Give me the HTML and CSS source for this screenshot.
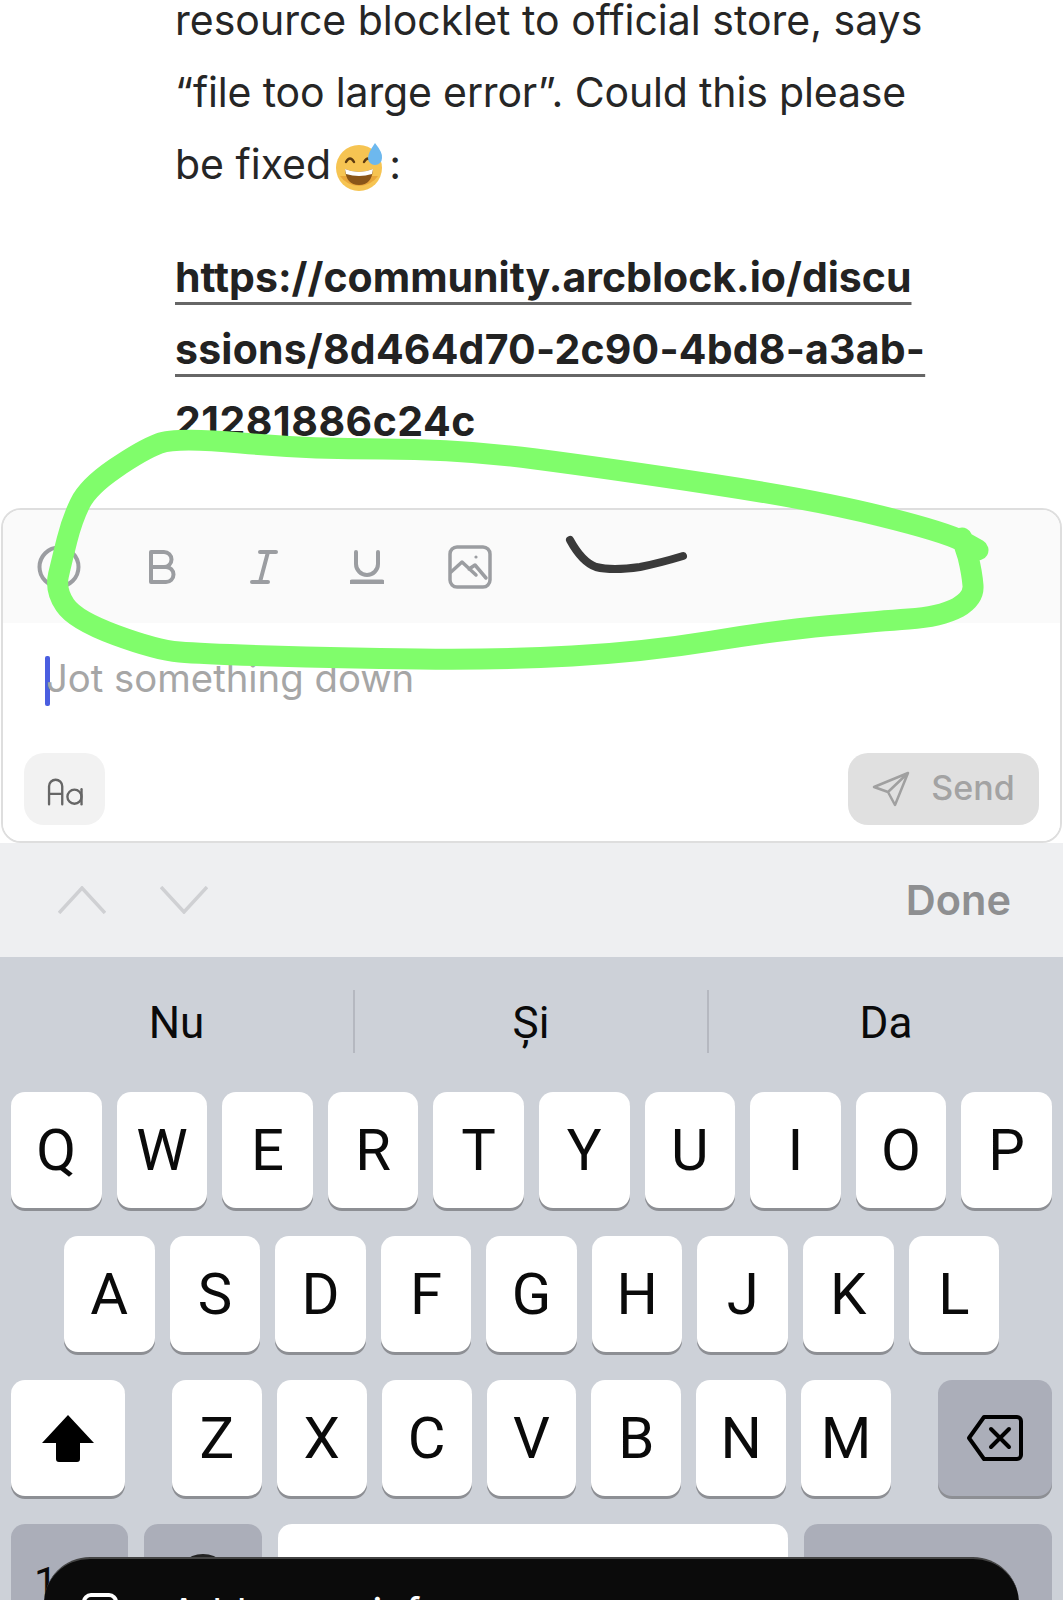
FILE: index.html
```html
<!DOCTYPE html>
<html lang="en">
  <head>
    <meta charset="UTF-8" />
    <meta name="viewport" content="width=device-width, initial-scale=1.0" />
    <title>Comment editor</title>
    <link rel="stylesheet" href="styles.css">
  </head>
  <body>
    <div class="screen">
      <div class="article">
        <div class="article-text">
          <p>resource blocklet to official store, says<br><span class="tight">“file too large error”. Could this please</span><br>be fixed<svg class="emoji" viewBox="0 0 50 50">
            <circle cx="24" cy="26" r="23" fill="#f6c452" />
            <path d="M5 34a23 23 0 0 0 38 0z" fill="#e9a63a" />
            <path d="M10 27q14 6 28 0q-1 16-14 16t-14-16z" fill="#8a5518" />
            <path d="M10 27q14 6 28 0l-1 5q-13 4-26 0z" fill="#fff" />
            <path d="M11 20q4-7 8 0M29 20q4-7 8 0" fill="none" stroke="#5c3a10" stroke-width="2.4" stroke-linecap="round" />
            <path d="M40 1q8 10 7 15a7 7 0 0 1-14 0q0-5 7-15z" fill="#6db8ee" />
          </svg>:</p>
          <p class="link-para"><a href="#">https://community.arcblock.io/discu<br><span class="wide">ssions/8d464d70-2c90-4bd8-a3ab-</span><br><span class="wider">21281886c24c</span></a></p>
        </div>
      </div>

      <div class="editor">
        <div class="toolbar">
          <svg class="tool tool-circle" viewBox="0 0 44 44"><circle cx="22" cy="22" r="19.5" /></svg>
          <svg class="tool tool-b" viewBox="0 0 28 34"><path d="M2 2h13a7.5 7.5 0 0 1 0 15H2zM2 17h15a7.5 7.5 0 0 1 0 15H2z" /></svg>
          <svg class="tool tool-i" viewBox="0 0 28 34"><path d="M10 2h16M2 32h16M18 2l-8 30" /></svg>
          <svg class="tool tool-u" viewBox="0 0 34 34"><path d="M6 2v12a11 11 0 0 0 22 0V2" /><path class="thick" d="M2 32h30" /></svg>
          <svg class="tool tool-img" viewBox="0 0 44 44"><rect x="2" y="2" width="40" height="40" rx="7" /><path d="M3 27l11-10 14 13M21 24l6-4 11 13" /><circle class="dot" cx="28" cy="12" r="1.6" /></svg>
        </div>
        <div class="editor-body">
          <div class="input-line">
            <span class="caret"></span>
            <span class="placeholder">Jot something down</span>
          </div>
          <div class="editor-actions">
            <button type="button" class="btn-font"><svg viewBox="0 0 40 34"><path d="M2 30V11a7 7 0 0 1 14 0v19M2 19h14" /><circle cx="29" cy="22" r="7.5" /><path d="M36.500 14v16" /></svg></button>
            <button type="button" class="btn-send">
              <svg viewBox="0 0 38 36"><path d="M36 2L2 16l14 5 7 13zM36 2L16 21" /></svg>
              <span>Send</span>
            </button>
          </div>
        </div>
      </div>

      <div class="accessory">
        <div class="arrows">
          <svg viewBox="0 0 48 28"><path d="M1 27L24 2l23 25" /></svg>
          <svg viewBox="0 0 48 28"><path d="M1 1l23 25L47 1" /></svg>
        </div>
        <span class="done">Done</span>
      </div>

      <div class="keyboard">
        <div class="suggestions">
          <span>Nu</span>
          <span>Și</span>
          <span>Da</span>
        </div>
        <div class="row row-1">
          <div class="key">Q</div><div class="key">W</div><div class="key">E</div><div class="key">R</div><div class="key">T</div><div class="key">Y</div><div class="key">U</div><div class="key">I</div><div class="key">O</div><div class="key">P</div>
        </div>
        <div class="row row-2">
          <div class="key">A</div><div class="key">S</div><div class="key">D</div><div class="key">F</div><div class="key">G</div><div class="key">H</div><div class="key">J</div><div class="key">K</div><div class="key">L</div>
        </div>
        <div class="row row-3">
          <div class="key key-shift"><svg viewBox="0 0 56 50"><path d="M28 2L54 30H40v16a3 3 0 0 1-3 3H19a3 3 0 0 1-3-3V30H2z" /></svg></div>
          <div class="letters">
            <div class="key">Z</div><div class="key">X</div><div class="key">C</div><div class="key">V</div><div class="key">B</div><div class="key">N</div><div class="key">M</div>
          </div>
          <div class="key key-dark key-del"><svg viewBox="0 0 56 46"><path d="M17 2h33a4 4 0 0 1 4 4v34a4 4 0 0 1-4 4H17L2 23z" /><path d="M24 14l18 18M42 14L24 32" /></svg></div>
        </div>
        <div class="row row-4">
          <div class="key key-dark key-num">123</div>
          <div class="key key-dark key-emoji"><svg viewBox="0 0 56 56"><circle cx="28" cy="28" r="26" /></svg></div>
          <div class="key key-space"></div>
          <div class="key key-dark key-return"></div>
        </div>
      </div>

      <!-- hand drawn marks on top of the screenshot -->
      <svg class="ink" viewBox="0 0 1063 1600">
        <path class="ink-green" d="M978 550L962 541Q945 532 880.500 516Q816 500 714 484.500Q612 469 535.500 459Q459 449 382.500 449Q306 449 241 443Q176 437 159 443.500Q142 450 115 468.500Q88 487 80 503.500Q72 520 67 540Q62 560 58.500 575Q55 590 65 605Q75 620 115.500 635Q156 650 179.500 652Q203 654 271 656Q339 658 419.500 659Q500 660 572 656Q644 652 712 641Q780 630 830.500 625.500Q881 621 908.500 619Q940 617 958 607.500Q974 598 973 585.500Q972 573 968 556.500L962 538" />
        <path class="ink-black" d="M570 540Q582 562 596 567Q612 571 640 567Q660 563 683 556" />
      </svg>

      <div class="sheet">
        <svg class="sheet-icon" viewBox="0 0 36 36"><rect x="2" y="2" width="32" height="40" rx="7" /></svg>
        <span class="sheet-text">Add some info</span>
      </div>
    </div>
  </body>
</html>
```

FILE: styles.css
```css
* {
  box-sizing: border-box;
}
html, body {
  margin: 0;
  padding: 0;
}
body {
  background-color: white;
  font-family: Inter, "Noto Sans", sans-serif;
}
.screen {
  position: relative;
  width: 1063px;
  height: 1600px;
  overflow: hidden;
  display: flex;
  flex-direction: column;
}

/* article */
.article {
  height: 508px;
  overflow: hidden;
  flex: none;
}
.article-text {
  margin-top: -16px;
  padding-left: 175px;
  font-size: 41px;
  line-height: 72px;
  color: #262626;
}
.article-text p {
  margin: 0 0 41px;
}
.tight {
  letter-spacing: -0.15px;
}
.wide {
  letter-spacing: 0.2px;
}
.wider {
  letter-spacing: 0.5px;
}
.emoji {
  width: 50px;
  height: 50px;
  vertical-align: -13px;
  margin-left: 4px;
  margin-right: 4px;
}
.link-para a {
  color: #222;
  font-weight: 700;
  text-decoration: underline;
  text-decoration-color: #666;
  text-decoration-thickness: 3px;
  text-decoration-skip-ink: none;
  text-underline-offset: 10px;
}

/* editor */
.editor {
  height: 335px;
  flex: none;
  margin: 0 1px;
  border: 2px solid #dedede;
  border-radius: 20px;
  overflow: hidden;
  display: flex;
  flex-direction: column;
}
.toolbar {
  height: 113px;
  background-color: #fafafa;
  position: relative;
  display: flex;
  align-items: center;
  padding: 0 0 0 34px;
}
.tool {
  fill: none;
  stroke: #9b9da1;
  stroke-width: 4;
  stroke-linecap: round;
  stroke-linejoin: round;
  flex: none;
}
.tool .thick {
  stroke-width: 5;
}
.tool .dot {
  fill: #9b9da1;
  stroke: none;
}
.tool-circle {
  width: 44px;
  height: 44px;
  margin-right: 68px;
}
.tool-b {
  width: 28px;
  height: 34px;
  margin-right: 73px;
}
.tool-i {
  width: 28px;
  height: 34px;
  margin-right: 72px;
}
.tool-u {
  width: 34px;
  height: 34px;
  margin-right: 64px;
}
.tool-img {
  width: 44px;
  height: 44px;
  stroke-width: 3.5;
}
.editor-body {
  flex: 1;
  background-color: white;
  display: flex;
  flex-direction: column;
  justify-content: space-between;
  padding: 33px 21px 16px 21px;
}
.input-line {
  display: flex;
  align-items: flex-start;
  height: 50px;
  padding-left: 21px;
  position: relative;
}
.caret {
  width: 5px;
  height: 50px;
  background-color: #4a5ee0;
  border-radius: 2px;
  flex: none;
}
.placeholder {
  font-size: 38.300px;
  line-height: 45px;
  color: #a6a6a6;
  margin-left: -4px;
}
.editor-actions {
  display: flex;
  justify-content: space-between;
}
.btn-font, .btn-send {
  border: none;
  height: 72px;
  border-radius: 20px;
  display: flex;
  align-items: center;
  justify-content: center;
  padding: 0;
}
.btn-font {
  width: 81px;
  background-color: #f2f2f2;
}
.btn-font svg {
  width: 38px;
  height: 32px;
  margin-top: 5px;
  margin-left: 2px;
  fill: none;
  stroke: #666;
  stroke-width: 2.5;
  stroke-linecap: round;
}
.btn-send {
  width: 191px;
  background-color: #e0e0e0;
  gap: 21px;
  font-family: Inter, sans-serif;
  font-size: 34px;
  font-weight: 500;
  color: #a3a3a3;
}
.btn-send span {
  padding-bottom: 4px;
}
.btn-send svg {
  width: 38px;
  height: 36px;
  fill: none;
  stroke: #a0a0a0;
  stroke-width: 2.5;
  stroke-linejoin: round;
}

/* accessory bar above keyboard */
.accessory {
  height: 114px;
  flex: none;
  background-color: #eeeff1;
  display: flex;
  justify-content: space-between;
  align-items: center;
  padding: 0 52px 0 58px;
}
.arrows {
  display: flex;
  gap: 54px;
}
.arrows svg {
  width: 48px;
  height: 28px;
  fill: none;
  stroke: #cfd0d3;
  stroke-width: 3.5;
}
.done {
  font-size: 41.500px;
  font-weight: 600;
  color: #8e8f91;
}

/* keyboard */
.keyboard {
  flex: 1;
  background-color: #cdd1d8;
  font-family: Roboto, sans-serif;
  color: #0a0a0a;
}
.suggestions {
  height: 135px;
  display: flex;
  padding-top: 33px;
  align-items: flex-start;
}
.suggestions span {
  height: 63px;
  font-size: 44px;
  line-height: 67px;
  text-align: center;
  border-left: 2px solid #b5b8c0;
}
.suggestions span:nth-child(1) {
  width: 353px;
  border-left: none;
}
.suggestions span:nth-child(2) {
  width: 354px;
}
.suggestions span:nth-child(3) {
  flex: 1;
}
.row {
  display: flex;
  gap: 15px;
  height: 116px;
  margin-bottom: 28px;
}
.row-1 {
  padding: 0 11px;
}
.row-2 {
  padding: 0 64px;
}
.row-3 {
  padding: 0 11px;
  gap: 47px;
}
.row-4 {
  padding: 0 11px;
  gap: 16px;
}
.letters {
  display: flex;
  gap: 15px;
  flex: 1;
}
.key {
  flex: 1;
  background-color: white;
  border-radius: 14px;
  box-shadow: 0 3px 0 #8d8f94;
  font-size: 58px;
  display: flex;
  align-items: center;
  justify-content: center;
}
.key-dark {
  background-color: #abaeb9;
  box-shadow: 0 3px 0 #8d8f94;
}
.key-shift {
  flex: none;
  width: 114px;
}
.key-shift svg {
  width: 56px;
  height: 50px;
  fill: black;
}
.key-del {
  flex: none;
  width: 114px;
}
.key-del svg {
  width: 56px;
  height: 46px;
  fill: none;
  stroke: black;
  stroke-width: 4;
  stroke-linejoin: round;
  stroke-linecap: round;
}
.key-num {
  flex: none;
  width: 117px;
  font-size: 42px;
}
.key-emoji {
  flex: none;
  width: 118px;
}
.key-emoji svg {
  width: 56px;
  height: 56px;
  fill: none;
  stroke: #222;
  stroke-width: 4;
}
.key-space {
  flex: none;
  width: 510px;
}
.key-return {
  flex: 1;
}

/* overlays */
.ink {
  position: absolute;
  top: 0;
  left: 0;
  width: 1063px;
  height: 1600px;
  pointer-events: none;
}
.ink-green {
  fill: none;
  stroke: #80fd6b;
  stroke-width: 21;
  stroke-linecap: round;
  stroke-linejoin: round;
}
.ink-black {
  fill: none;
  stroke: #3a3a3a;
  stroke-width: 8;
  stroke-linecap: round;
  stroke-linejoin: round;
}
.sheet {
  position: absolute;
  top: 1557px;
  left: 44px;
  width: 975px;
  height: 120px;
  background-color: #0b0b0b;
  border-top: 2px solid #444;
  border-radius: 46px 46px 0 0;
  color: white;
  font-size: 40px;
  display: flex;
  align-items: flex-start;
  padding: 34px 0 0 38px;
  gap: 52px;
}
.sheet-icon {
  width: 36px;
  height: 36px;
  fill: none;
  stroke: white;
  stroke-width: 4;
  flex: none;
}
.sheet-text {
  line-height: 48px;
  margin-top: -4px;
}
```
